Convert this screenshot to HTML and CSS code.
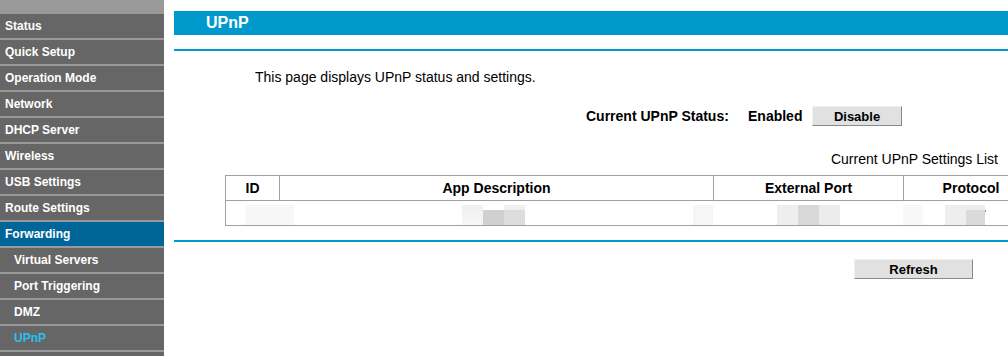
FILE: index.html
```html
<!DOCTYPE html>
<html lang="en">
<head>
  <meta charset="UTF-8" />
  <title>UPnP</title>
  <link rel="stylesheet" href="styles.css">
</head>
<body>

  <div class="menu">
    <div class="menu-top"></div>
    <a class="item">Status</a>
    <a class="item">Quick Setup</a>
    <a class="item">Operation Mode</a>
    <a class="item">Network</a>
    <a class="item">DHCP Server</a>
    <a class="item">Wireless</a>
    <a class="item">USB Settings</a>
    <a class="item">Route Settings</a>
    <a class="item open">Forwarding</a>
    <a class="item sub">Virtual Servers</a>
    <a class="item sub">Port Triggering</a>
    <a class="item sub">DMZ</a>
    <a class="item sub current">UPnP</a>
  </div>

  <div class="main">
    <div class="title">UPnP</div>
    <div class="rule"></div>

    <p class="intro">This page displays UPnP status and settings.</p>

    <div class="status">
      <span class="status-label">Current UPnP Status:</span>
      <span class="status-value">Enabled</span>
      <button class="btn btn-disable">Disable</button>
    </div>

    <div class="list-caption">Current UPnP Settings List</div>

    <table class="list">
      <colgroup>
        <col class="c-id">
        <col class="c-desc">
        <col class="c-port">
        <col class="c-proto">
      </colgroup>
      <tr>
        <th>ID</th>
        <th>App Description</th>
        <th>External Port</th>
        <th>Protocol</th>
      </tr>
      <tr>
        <td colspan="4" class="masked"><div class="mosaic"></div></td>
      </tr>
    </table>

    <div class="rule rule-bottom"></div>

    <button class="btn btn-refresh">Refresh</button>
  </div>

</body>
</html>
```

FILE: styles.css
```css
:root {
  --menu-bg: #666666;
  --menu-line: #999999;
  --menu-open: #006699;
  --menu-current: #2bc0f0;
  --accent: #0099cc;
  --grid: #a0a0a0;
  --text: #000000;
}

* {
  box-sizing: border-box;
  font-family: 'Liberation Sans', Arial, sans-serif;
}

html, body {
  height: 100%;
}

body {
  margin: 0;
  display: flex;
  gap: 10px;
  overflow: hidden;
  color: var(--text);
  background: #ffffff;
}

/* left menu */

.menu {
  width: 164px;
  flex: none;
  background: var(--menu-bg);
}

.menu-top {
  height: 14px;
  background: var(--menu-line);
}

.item {
  display: block;
  height: 26px;
  padding-left: 5px;
  line-height: 24px;
  font-size: 12px;
  font-weight: bold;
  color: #ffffff;
  background: var(--menu-bg);
  border-bottom: 2px solid var(--menu-line);
  cursor: pointer;
}

.item.sub { padding-left: 14px; }
.item.open { background: var(--menu-open); }
.item.current { color: var(--menu-current); }

/* content */

.main {
  flex: 1;
  min-width: 0;
  padding-top: 11px;
}

.title {
  height: 24px;
  padding-left: 32px;
  line-height: 23px;
  font-size: 16px;
  font-weight: bold;
  color: #ffffff;
  background: var(--accent);
}

.rule {
  height: 2px;
  margin-top: 14px;
  background: var(--accent);
}

.intro {
  margin: 18px 0 0 81px;
  font-size: 14px;
  line-height: 16px;
}

.status {
  display: flex;
  align-items: center;
  height: 20px;
  margin: 21px 0 0 412px;
  font-size: 14px;
  font-weight: bold;
}

.status-label { width: 162px; }
.status-value { width: 64px; }

.btn {
  height: 20px;
  padding: 0;
  font-size: 13px;
  font-weight: bold;
  color: #000000;
  background: #e1e1e1;
  border: 1px solid;
  border-color: #f0f0f0 #8a8a8a #8a8a8a #f0f0f0;
  cursor: pointer;
}

.btn-disable { width: 90px; }

.list-caption {
  margin-top: 25px;
  padding-right: 10px;
  text-align: right;
  font-size: 14px;
  line-height: 16px;
}

.list {
  width: 813px;
  margin: 8px 0 0 51px;
  border-collapse: collapse;
  table-layout: fixed;
}

.c-id { width: 54px; }
.c-desc { width: 434px; }
.c-port { width: 190px; }
.c-proto { width: 135px; }

.list th,
.list td {
  height: 25px;
  padding: 0;
  border: 1px solid var(--grid);
  font-size: 14px;
  text-align: center;
  vertical-align: middle;
}

.list td.masked {
  vertical-align: top;
}

/* blurred-out row, as in the capture */
.mosaic {
  height: 24px;
  background:
    linear-gradient(#f7f7f7, #f7f7f7) 19px 4px / 49px 20px no-repeat,
    linear-gradient(#f0f0f0, #f5f6f8) 236px 4px / 21px 20px no-repeat,
    linear-gradient(#d0d0d0, #d0d0d0) 257px 9px / 21px 15px no-repeat,
    linear-gradient(#dcdedd, #dcdedd) 278px 9px / 21px 15px no-repeat,
    linear-gradient(#f0f0f0, #f0f0f0) 278px 4px / 21px 5px no-repeat,
    linear-gradient(#f6f6f6, #f6f6f6) 467px 4px / 20px 20px no-repeat,
    linear-gradient(#eeeeee, #eeeeee) 551px 4px / 21px 20px no-repeat,
    linear-gradient(#d8d8d8, #d8d8d8) 572px 4px / 21px 20px no-repeat,
    linear-gradient(#ececec, #ececec) 593px 4px / 21px 20px no-repeat,
    linear-gradient(#f8f8f8, #f8f8f8) 677px 4px / 20px 20px no-repeat,
    linear-gradient(#eeeeee, #eeeeee) 719px 4px / 21px 20px no-repeat,
    linear-gradient(#dadad8, #dadad8) 740px 9px / 19px 15px no-repeat,
    linear-gradient(#ececec, #ececec) 740px 4px / 19px 5px no-repeat,
    linear-gradient(#4aa8d8, #4aa8d8) 759px 9px / 1px 2px no-repeat;
}

.rule-bottom {
  margin-top: 14px;
}

.btn-refresh {
  display: block;
  width: 119px;
  margin: 17px 0 0 680px;
}
```
